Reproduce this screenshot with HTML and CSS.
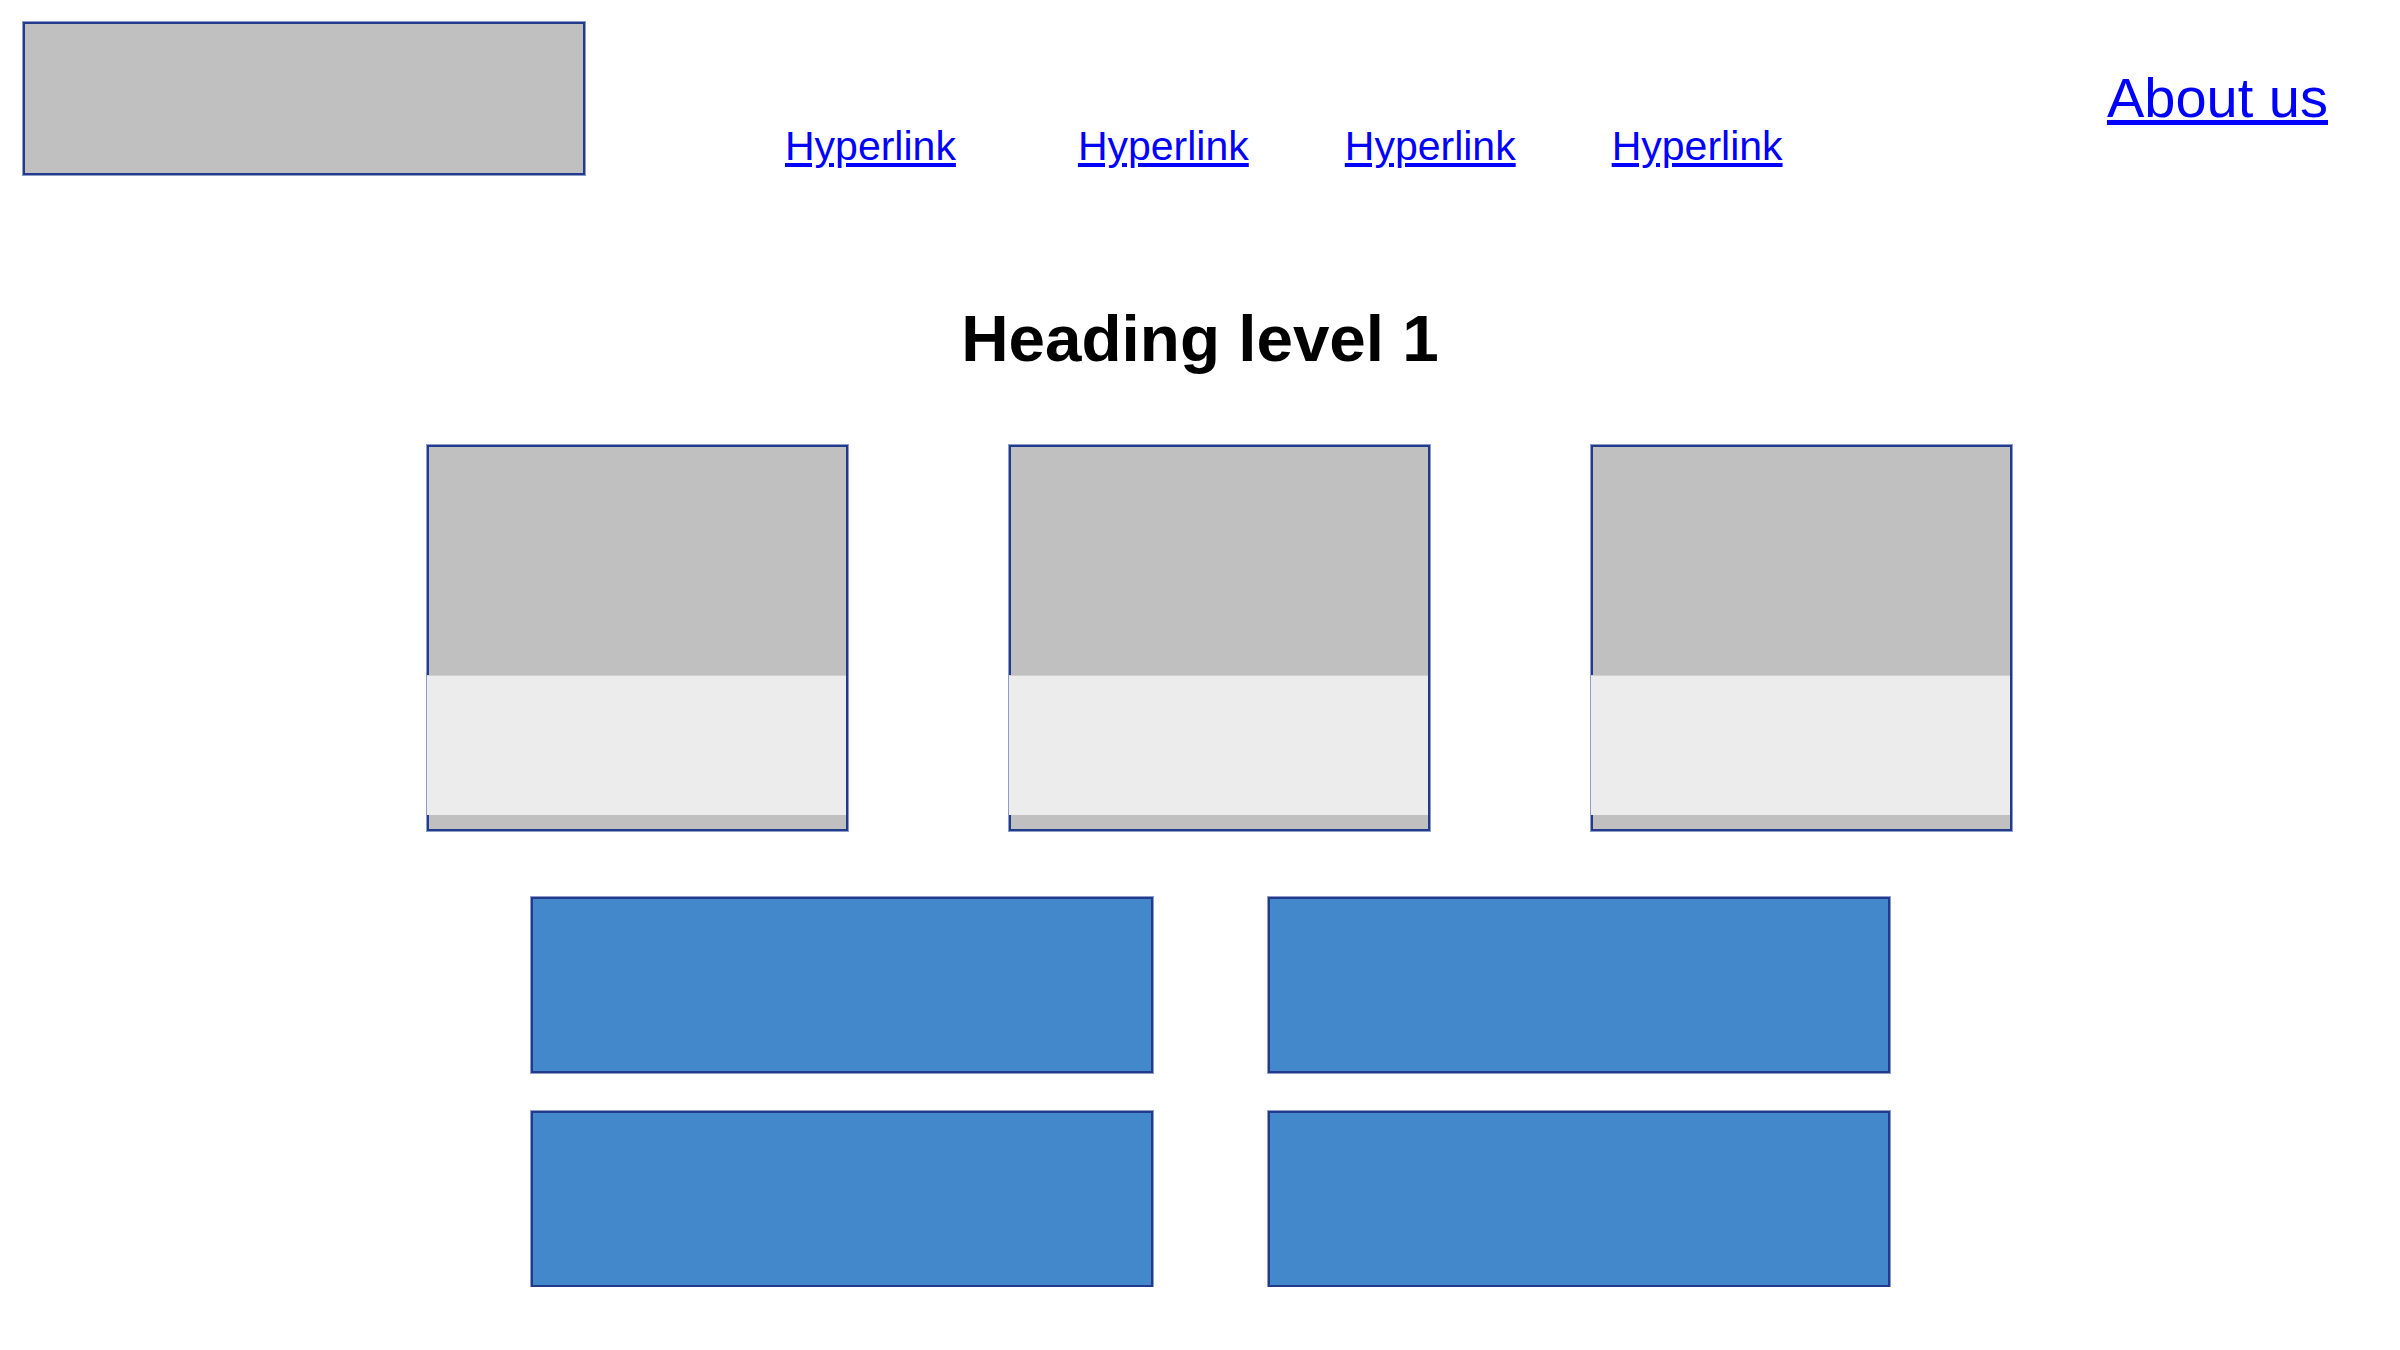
FILE: index.html
```html
<!DOCTYPE html>
<html lang="en">
<head>
    <meta charset="UTF-8">
    <meta name="viewport" content="width=device-width, initial-scale=1.0">
    <title>Home</title>
    <link rel="stylesheet" href="styles.css">
</head>
<body>
    <header class="site-header">
        <div class="logo"></div>
        <nav class="main-nav">
            <a href="#">Hyperlink</a>
            <a href="#">Hyperlink</a>
            <a href="#">Hyperlink</a>
            <a href="#">Hyperlink</a>
        </nav>
        <a href="#" class="about-link">About us</a>
    </header>

    <main>
        <h1 class="page-title">Heading level 1</h1>

        <section class="cards">
            <div class="card">
                <div class="card-caption"></div>
            </div>
            <div class="card">
                <div class="card-caption"></div>
            </div>
            <div class="card">
                <div class="card-caption"></div>
            </div>
        </section>

        <section class="tiles">
            <div class="tile"></div>
            <div class="tile"></div>
            <div class="tile"></div>
            <div class="tile"></div>
        </section>
    </main>
</body>
</html>
```

FILE: styles.css
```css
body {
    margin: 0;
    padding: 0;
    background-color: #ffffff;
    color: #000000;
    font-family: 'Liberation Sans', Arial, sans-serif;
}

a {
    color: #0000ff;
    text-decoration: underline;
}

.site-header {
    display: flex;
    align-items: flex-start;
    padding: 22px 72px 0 23px;
}

.logo {
    box-sizing: border-box;
    width: 562px;
    height: 153px;
    background-color: #c0c0c0;
    border: 2px solid #223a8c;
    box-shadow: 0 0 0 1px #8f9cc8;
}

.main-nav {
    display: flex;
    gap: 96px;
    margin-left: 200px;
    margin-top: 101px;
}

.main-nav a {
    font-size: 41px;
}

.main-nav a:first-child {
    margin-right: 26px; /* first gap is a little wider */
}

.about-link {
    margin-left: auto;
    margin-top: 43px;
    font-size: 56px;
}

.page-title {
    margin: 126px 0 0;
    font-size: 65.6px;
    font-weight: 700;
    text-align: center;
}

.cards {
    display: flex;
    gap: 161px;
    padding-left: 427px;
    margin-top: 69px;
}

.card {
    box-sizing: border-box;
    width: 421px;
    height: 386px;
    padding-top: 228px;
    background-color: #c0c0c0;
    border: 2px solid #223a8c;
    box-shadow: 0 0 0 1px #8f9cc8;
}

.card-caption {
    height: 139px;
    margin-left: -2px;
    background-color: #ececec;
    border-top: 1px solid #d0d0d0;
}

.tiles {
    display: grid;
    grid-template-columns: 622px 622px;
    grid-auto-rows: 176px;
    column-gap: 115px;
    row-gap: 38px;
    padding-left: 531px;
    margin-top: 66px;
}

.tile {
    box-sizing: border-box;
    background-color: #4388cb;
    border: 2px solid #223a8c;
    box-shadow: 0 0 0 1px #8f9cc8;
}
```
